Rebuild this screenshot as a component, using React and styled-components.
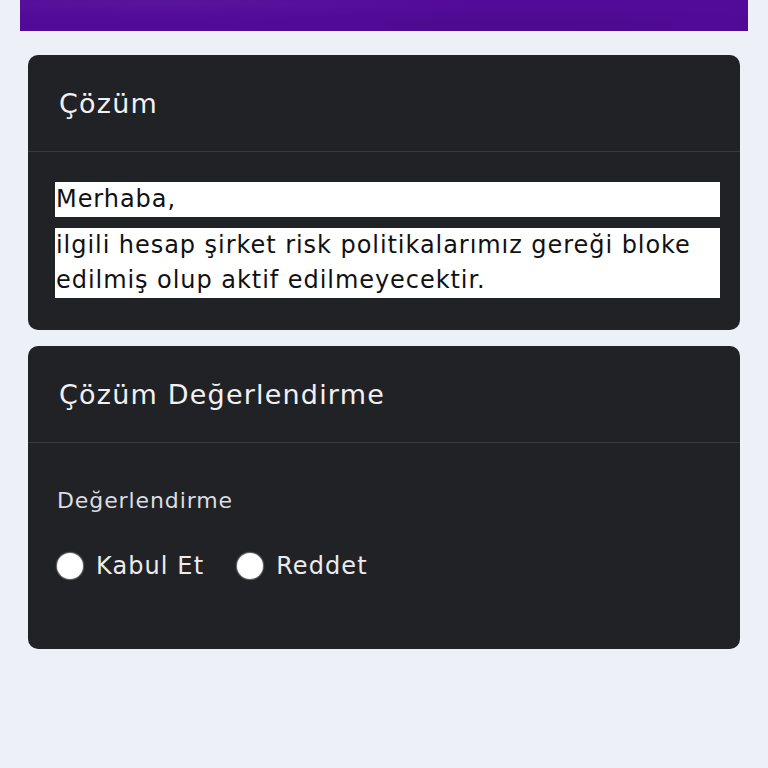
import React, { useState } from "react";
import styled, { createGlobalStyle } from "styled-components";

const GlobalStyle = createGlobalStyle`
  html, body {
    margin: 0;
    padding: 0;
    background: #eef0f8;
  }
  body {
    font-family: "DejaVu Sans", "Noto Sans", sans-serif;
  }
`;

const Page = styled.div`
  padding: 0 20px;
  min-height: 768px;
  box-sizing: border-box;
`;

const Banner = styled.div`
  height: 31px;
  background:
    radial-gradient(ellipse at 20% 10%, rgba(255, 255, 255, 0.04), transparent 40%),
    radial-gradient(ellipse at 70% 80%, rgba(0, 0, 0, 0.06), transparent 45%),
    #520a98;
  margin-bottom: 24px;
`;

const Stack = styled.div`
  display: flex;
  flex-direction: column;
  gap: 16px;
  padding: 0 8px;
`;

const Card = styled.section`
  background: #212226;
  border-radius: 10px;
  color: #ececef;
  overflow: hidden;
`;

const CardHeader = styled.div`
  height: 96px;
  display: flex;
  align-items: center;
  padding: 0 31px;
  border-bottom: 1px solid #37393e;
`;

const CardTitle = styled.h2`
  margin: 0;
  font-size: 27px;
  font-weight: 400;
  color: #f1f1f3;
  letter-spacing: 1.2px;
`;

const CardBody = styled.div`
  padding: ${(p) => p.$pad};
`;

const Note = styled.p`
  margin: 0 0 11px 0;
  background: #ffffff;
  color: #111111;
  font-size: 24px;
  line-height: 35px;
  letter-spacing: 0.95px;
  padding: 0 1px;
  &:last-child {
    margin-bottom: 0;
  }
`;

const FieldLabel = styled.div`
  font-size: 22px;
  line-height: 26px;
  letter-spacing: 0.9px;
  color: #dcdde0;
  margin-bottom: 37px;
`;

const RadioRow = styled.div`
  display: flex;
  align-items: center;
  gap: 33px;
  height: 30px;
`;

const RadioOption = styled.label`
  display: flex;
  align-items: center;
  gap: 13px;
  font-size: 24px;
  letter-spacing: 1.1px;
  color: #ececef;
  cursor: pointer;
`;

const RadioDot = styled.span`
  width: 26px;
  height: 26px;
  border-radius: 50%;
  background: #ffffff;
  box-shadow: 0 0 1px 1px rgba(255, 255, 255, 0.35);
  display: flex;
  align-items: center;
  justify-content: center;
  &::after {
    content: "";
    width: 12px;
    height: 12px;
    border-radius: 50%;
    background: ${(p) => (p.$on ? "#520a98" : "transparent")};
  }
`;

export default function App() {
  const [choice, setChoice] = useState(null);

  return (
    <>
      <GlobalStyle />
      <Page>
        <Banner />
        <Stack>
          <Card>
            <CardHeader>
              <CardTitle>Çözüm</CardTitle>
            </CardHeader>
            <CardBody $pad="30px 20px 32px 27px">
              <Note>Merhaba,</Note>
              <Note>
                ilgili hesap şirket risk politikalarımız gereği bloke edilmiş
                olup aktif edilmeyecektir.
              </Note>
            </CardBody>
          </Card>
          <Card>
            <CardHeader>
              <CardTitle>Çözüm Değerlendirme</CardTitle>
            </CardHeader>
            <CardBody $pad="45px 29px 68px 29px">
              <FieldLabel>Değerlendirme</FieldLabel>
              <RadioRow>
                <RadioOption onClick={() => setChoice("accept")}>
                  <RadioDot $on={choice === "accept"} />
                  Kabul Et
                </RadioOption>
                <RadioOption onClick={() => setChoice("reject")}>
                  <RadioDot $on={choice === "reject"} />
                  Reddet
                </RadioOption>
              </RadioRow>
            </CardBody>
          </Card>
        </Stack>
      </Page>
    </>
  );
}
